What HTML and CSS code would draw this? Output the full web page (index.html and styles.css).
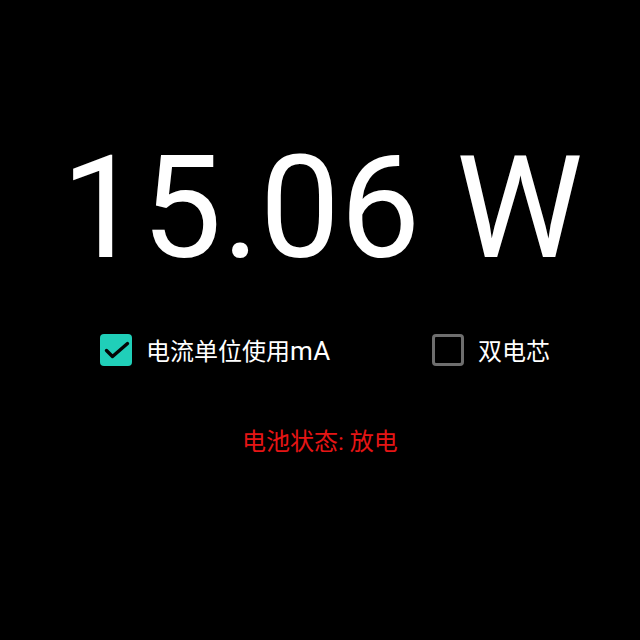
FILE: index.html
```html
<!DOCTYPE html>
<html>
<head>
<meta charset="utf-8">
<link rel="stylesheet" href="styles.css">
</head>
<body>
<div class="screen">
  <div class="power">15.06 W</div>
  <div class="options">
    <div class="opt">
      <span class="box checked">
        <svg viewBox="0 0 32 32" width="32" height="32"><path d="M6.5 16.5 L12.5 22.5 L27.5 9.5" fill="none" stroke="#050505" stroke-width="3.4" stroke-linecap="round" stroke-linejoin="round"/></svg>
      </span>
      <span class="label">电流单位使用<span class="latin">mA</span></span>
    </div>
    <div class="opt">
      <span class="box"></span>
      <span class="label">双电芯</span>
    </div>
  </div>
  <div class="status">电池状态: 放电</div>
</div>
</body>
</html>
```
FILE: styles.css
```css
html, body {
  margin: 0;
  padding: 0;
  background: #000;
}
.screen {
  width: 640px;
  height: 640px;
  background: #000;
  display: flex;
  flex-direction: column;
  align-items: center;
  font-family: Roboto, "Noto Sans CJK SC", sans-serif;
  color: #fff;
}
.power {
  margin-top: 123px;
  font-size: 143px;
  line-height: 170px;
  font-weight: 400;
  transform: translateX(2px);
}
.options {
  margin-top: 39px;
  width: 640px;
  box-sizing: border-box;
  padding-left: 100px;
  display: grid;
  grid-template-columns: 332px auto;
  align-items: center;
}
.opt {
  display: flex;
  align-items: center;
}
.box {
  width: 32px;
  height: 32px;
  box-sizing: border-box;
  border-radius: 4px;
  border: 3px solid #6e6e6e;
  display: flex;
  align-items: center;
  justify-content: center;
}
.box.checked {
  border: none;
  background: #20cfb9;
}
.label {
  margin-left: 14px;
  font-size: 24px;
  font-family: Roboto, "Noto Sans CJK SC", sans-serif;
  color: #fff;
}
.latin {
  font-size: 26px;
  letter-spacing: 0.5px;
}
.status {
  margin-top: 55px;
  font-size: 24px;
  font-family: Roboto, "Noto Sans CJK SC", sans-serif;
  color: #e51515;
}
```
